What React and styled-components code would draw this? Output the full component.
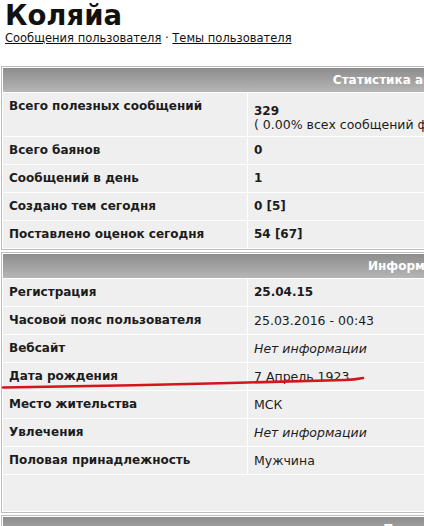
import React from "react";
import styled, { createGlobalStyle } from "styled-components";

const GlobalStyle = createGlobalStyle`
    html, body {
        margin: 0;
        padding: 0;
        background: #ffffff;
        overflow: hidden;
    }
    body {
        font-family: "DejaVu Sans", Verdana, sans-serif;
        color: #1c1c1c;
    }
`;

const statRows = [
    { label: "Всего полезных сообщений", value: "329", note: "( 0.00% всех сообщений форума / 0.00 сообщений в день )", bold: true },
    { label: "Всего баянов", value: "0", bold: true },
    { label: "Сообщений в день", value: "1", bold: true },
    { label: "Создано тем сегодня", value: "0 [5]", bold: true },
    { label: "Поставлено оценок сегодня", value: "54 [67]", bold: true },
];

const infoRows = [
    { label: "Регистрация", value: "25.04.15", bold: true },
    { label: "Часовой пояс пользователя", value: "25.03.2016 - 00:43" },
    { label: "Вебсайт", value: "Нет информации", italic: true },
    { label: "Дата рождения", value: "7 Апрель 1923" },
    { label: "Место жительства", value: "МСК" },
    { label: "Увлечения", value: "Нет информации", italic: true },
    { label: "Половая принадлежность", value: "Мужчина" },
];

function Row({ row }) {
    return (
        <tr>
            <Label>{row.label}</Label>
            <Value $bold={row.bold} $italic={row.italic} $tall={!!row.note}>
                {row.value}
                {row.note && <Note>{row.note}</Note>}
            </Value>
        </tr>
    );
}

export default function App() {
    return (
        <Page>
            <GlobalStyle />
            <Top>
                <Title>Коляйа</Title>
                <Links>
                    <a href="#posts">Сообщения пользователя</a> · <a href="#topics">Темы пользователя</a>
                </Links>
            </Top>

            <Table>
                <tbody>
                    <tr>
                        <Head colSpan={2}>Статистика активности</Head>
                    </tr>
                    {statRows.map((row) => (
                        <Row key={row.label} row={row} />
                    ))}
                </tbody>
            </Table>

            <Table>
                <tbody>
                    <tr>
                        <Head colSpan={2}>Информация</Head>
                    </tr>
                    {infoRows.map((row) => (
                        <Row key={row.label} row={row} />
                    ))}
                    <tr>
                        <Filler colSpan={2} />
                    </tr>
                </tbody>
            </Table>

            <Table>
                <tbody>
                    <tr>
                        <Head colSpan={2}>Подпись</Head>
                    </tr>
                </tbody>
            </Table>

            {/* red marker stroke under the birth date row */}
            <Scribble viewBox="0 0 424 526" width="424" height="526">
                <path
                    d="M3 387.5 C 60 386.5, 160 385, 230 383 C 280 381.5, 320 380.5, 345 380 C 352 379.8, 358 379, 363 378"
                    fill="none"
                    stroke="#d3161b"
                    strokeWidth="2.6"
                    strokeLinecap="round"
                />
            </Scribble>
        </Page>
    );
}

const Page = styled.div`
    position: relative;
    width: 424px;
    height: 526px;
    overflow: hidden;
`;

const Top = styled.div`
    padding: 0 5px;
    margin-bottom: 20px;
`;

const Title = styled.h1`
    margin: 0;
    font-size: 27.5px;
    line-height: 31px;
    font-weight: bold;
    color: #111111;
`;

const Links = styled.div`
    font-size: 11.5px;
    line-height: 15px;
    color: #111111;

    a {
        color: #111111;
        text-decoration: underline;
    }
`;

const Table = styled.table`
    width: 824px;
    margin: 0 0 2px 1px;
    border: 1px solid #bdbdbd;
    border-spacing: 1px;
    background: #ffffff;
    font-size: 12px;
`;

const Head = styled.th`
    height: 24px;
    padding: 0;
    background: linear-gradient(to bottom, #8d8d8d 0%, #a3a3a3 55%, #b6b6b6 100%);
    color: #ffffff;
    font-size: 12px;
    font-weight: bold;
    text-align: center;
`;

const Label = styled.td`
    width: 232px;
    padding: 7px 6px;
    line-height: 13px;
    background: #efefef;
    font-weight: bold;
    vertical-align: top;
    white-space: nowrap;
`;

const Value = styled.td`
    padding: ${(p) => (p.$tall ? "12px 6px 5px" : "7px 6px")};
    line-height: 13px;
    background: #efefef;
    font-size: ${(p) => (p.$bold ? "12px" : "12.5px")};
    font-weight: ${(p) => (p.$bold ? "bold" : "normal")};
    font-style: ${(p) => (p.$italic ? "italic" : "normal")};
    vertical-align: top;
    white-space: nowrap;
`;

const Note = styled.div`
    font-weight: normal;
    font-size: 12.5px;
`;

const Filler = styled.td`
    height: 36px;
    padding: 0;
    background: #efefef;
`;

const Scribble = styled.svg`
    position: absolute;
    left: 0;
    top: 0;
    pointer-events: none;
`;
